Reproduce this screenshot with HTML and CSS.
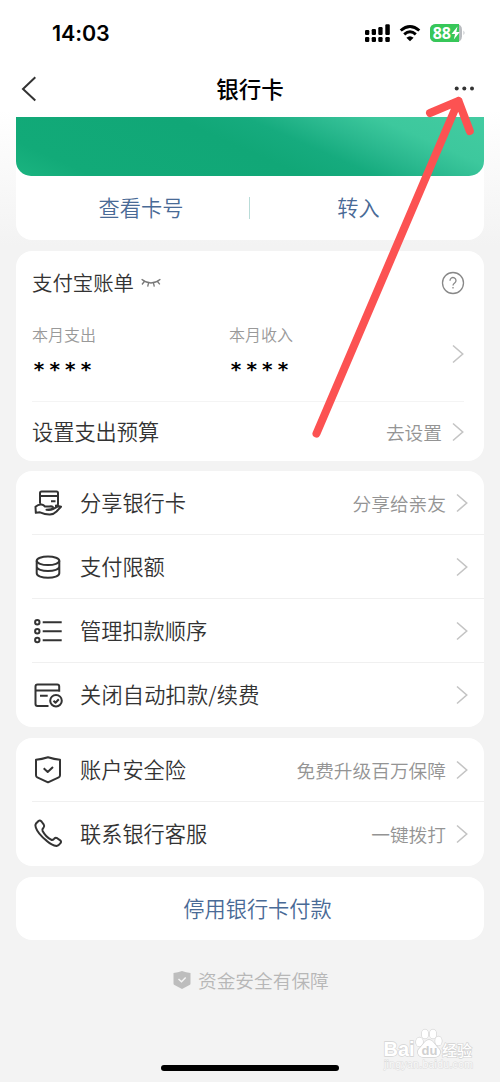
FILE: index.html
```html
<!DOCTYPE html>
<html lang="zh-CN">
<head>
<meta charset="utf-8">
<title>银行卡</title>
<link rel="stylesheet" href="styles.css">
</head>
<body>
<div class="screen">
  <header class="status">
    <span class="time">14:03</span>
    <svg class="status-icons" width="104" height="24" viewBox="0 0 104 24">
      <g fill="#000">
        <rect x="1" y="9" width="4.300" height="5" rx="1.200"/><rect x="7.700" y="8" width="4.300" height="6" rx="1.200"/><rect x="14.300" y="6" width="4.300" height="8" rx="1.200"/><rect x="21.300" y="3.300" width="4.500" height="10.700" rx="1.200"/>
        <rect x="1" y="16" width="4.300" height="5" rx="1.200"/><rect x="7.700" y="16" width="4.300" height="5" rx="1.200"/><rect x="14.300" y="16" width="4.300" height="5" rx="1.200"/><rect x="21.300" y="16" width="4.500" height="5" rx="1.200"/>
      </g>
      <path d="M36.700 9.500Q46 1.400 55.300 9.500M40.200 13.300Q46 8.100 51.800 13.300" fill="none" stroke="#000" stroke-width="2.900"/>
      <path d="M42.400 16.700Q46 13.700 49.600 16.700L46 20.300Z" fill="#000"/>
      <path d="M71.500 3h21a5.500 5.500 0 0 1 5.500 5.500v7a5.500 5.500 0 0 1-5.500 5.500h-21a5.500 5.500 0 0 1-5.500-5.500V8.500a5.500 5.500 0 0 1 5.500-5.500z" fill="#b9bcc0"/>
      <path d="M71.500 3H95v18H71.500a5.500 5.500 0 0 1-5.500-5.500V8.500a5.500 5.500 0 0 1 5.500-5.500z" fill="#37c759"/>
      <path d="M99.500 9.500q2 2.300 0 4.600z" fill="#b9bcc0"/>
      <text class="battery" x="68.800" y="18">88</text>
      <path d="M93.500 5.500L87.500 13h3.600l-1.300 5.500 6-7.600h-3.500z" fill="#fff"/>
    </svg>
  </header>
  <nav class="nav">
    <svg class="back" width="16" height="26" viewBox="0 0 16 26"><path d="M15.300 1.300L3 13l12.300 11.500" fill="none" stroke="#333" stroke-width="2"/></svg>
    <h1 class="title">银行卡</h1>
    <svg class="more" width="22" height="6" viewBox="0 0 22 6" fill="#333"><circle cx="2.700" cy="2.500" r="2"/><circle cx="10.300" cy="2.500" r="2"/><circle cx="18" cy="2.500" r="2"/></svg>
  </nav>
  <main class="content">
    <section class="card bank">
      <div class="bank-face"></div>
      <div class="bank-actions"><a>查看卡号</a><i class="split"></i><a>转入</a></div>
    </section>

    <section class="card bill">
      <div class="bill-head">
        <span class="bill-title">支付宝账单</span>
        <svg width="20" height="10" viewBox="0 0 20 10" fill="none" stroke="#777" stroke-width="1.300"><path d="M.6 1.300Q10 8.700 19.400 1.300M3.300 3.500L1 6.500M7.500 5L6.700 8.700M12.500 5l.8 3.700M16.500 3.500L18.800 6.300"/></svg>
        <svg class="help" width="24" height="24" viewBox="0 0 24 24" fill="none" stroke="#888" stroke-width="1.300"><circle cx="12" cy="12" r="10.500"/><path d="M9 9.700a3 3 0 1 1 4.700 2.300C12.500 12.800 12 13.100 12 14.500M12 16v1.500"/></svg>
      </div>
      <div class="totals">
        <div class="total"><span class="caption">本月支出</span><span class="stars">****</span></div>
        <div class="total"><span class="caption">本月收入</span><span class="stars">****</span></div>
        <svg class="chev" viewBox="0 0 12 20"><path d="M1 1.500L10.700 10 1 18.500"/></svg>
      </div>
      <div class="budget">
        <span class="label">设置支出预算</span><span class="hint">去设置</span>
        <svg class="chev" viewBox="0 0 12 20"><path d="M1 1.500L10.700 10 1 18.500"/></svg>
      </div>
    </section>

    <section class="card list">
      <div class="row">
        <svg class="icon" viewBox="0 0 32 32"><path d="M8 16.500V6Q8 4.500 9.500 4.500h15Q26 4.500 26 6v11q0 1.700-1.800 1.700H23M8 9h18M19 14.200h4.500M3.500 19.700Q6.500 17 9.500 17.500q2 .3 3.500 2 3 .3 6-.2 2.300 0 1.800 1.500-.6 1.400-3.800 1.700l-2.500.3q4 .5 6.500-.7l4-2.300q2-.9 4-.1l-4.500 4.800q-2.700 2.700-6.500 3-4.500.2-10-2.200l-4.200.5z"/></svg>
        <span class="label">分享银行卡</span><span class="hint">分享给亲友</span><svg class="chev" viewBox="0 0 12 20"><path d="M1 1.500L10.700 10 1 18.500"/></svg>
      </div>
      <div class="row">
        <svg class="icon" viewBox="0 0 32 32"><ellipse cx="16" cy="9.800" rx="11.300" ry="4.300"/><path d="M4.700 9.800v12.500c0 6 22.600 6 22.600 0V9.800M4.700 15.500c0 6 22.600 6 22.600 0"/></svg>
        <span class="label">支付限额</span><svg class="chev" viewBox="0 0 12 20"><path d="M1 1.500L10.700 10 1 18.500"/></svg>
      </div>
      <div class="row">
        <svg class="icon" viewBox="0 0 32 32"><circle cx="5.300" cy="7.300" r="2.200"/><circle cx="5.300" cy="16.200" r="2.200"/><circle cx="5.300" cy="25" r="2.200"/><path d="M10.700 7.300h19M10.700 16.300h19M10.700 25.200h19"/></svg>
        <span class="label">管理扣款顺序</span><svg class="chev" viewBox="0 0 12 20"><path d="M1 1.500L10.700 10 1 18.500"/></svg>
      </div>
      <div class="row">
        <svg class="icon" viewBox="0 0 32 32"><path d="M16.500 27H5.500Q3.500 27 3.500 25V7.500q0-2 2-2h19.700q2 0 2 2v5.300M3.500 11.500h23.700M8 16.800h7.700"/><circle cx="24" cy="21.700" r="5.800"/><path d="M21.500 21.700l2 2 3.300-3.500"/></svg>
        <span class="label wide">关闭自动扣款/续费</span><svg class="chev" viewBox="0 0 12 20"><path d="M1 1.500L10.700 10 1 18.500"/></svg>
      </div>
    </section>

    <section class="card list">
      <div class="row">
        <svg class="icon" viewBox="0 0 32 32"><path d="M16 3.300Q22.300 5.300 28 5.700v15.500q0 1.500-1.300 2.200L16 28.300 5.300 23.400Q4 22.700 4 21.200V5.700Q9.700 5.300 16 3.300zM11.700 14.300l4 3.700 5.300-5"/></svg>
        <span class="label">账户安全险</span><span class="hint">免费升级百万保障</span><svg class="chev" viewBox="0 0 12 20"><path d="M1 1.500L10.700 10 1 18.500"/></svg>
      </div>
      <div class="row">
        <svg class="icon" viewBox="0 0 32 32"><path d="M4 5.500L6.500 3Q8 1.700 9.500 3.500l2.300 3.200q1 1.500-.2 2.800-1.800 1.600-1 3.500 3.200 6 8.500 8.700 2 .7 3.300-1.200 1.200-1.300 2.800-.3l3 2.200q1.600 1.300.2 2.800-1.500 2.200-3.800 2.700-4.800-.6-9.800-5Q5.800 15.700 3.800 9.500q-.9-2.700.2-4z"/></svg>
        <span class="label">联系银行客服</span><span class="hint">一键拨打</span><svg class="chev" viewBox="0 0 12 20"><path d="M1 1.500L10.700 10 1 18.500"/></svg>
      </div>
    </section>

    <section class="card disable">停用银行卡付款</section>

    <footer class="safe">
      <svg width="18" height="20" viewBox="0 0 18 20"><path d="M9 1q4 1.600 8.500 2v10.500q0 1-1 1.500L9 19 1.500 15q-1-.5-1-1.500V3q4.500-.4 8.500-2z" fill="#bdbdbd"/><path d="M5.500 9l3 2.700L12.700 7.500" fill="none" stroke="#f4f4f4" stroke-width="1.500"/></svg>
      <span>资金安全有保障</span>
    </footer>
  </main>

  <svg class="arrow" width="500" height="460" viewBox="0 0 500 460"><path d="M316.500 433.500L458.500 101M430 113l28.500-12 11.300 30"/></svg>

  <svg class="watermark" width="100" height="46" viewBox="0 0 100 46">
    <g class="wm-shape"><text class="wm-name" x="2.500" y="29" textLength="31">Bai</text>
    <ellipse cx="38.500" cy="15" rx="3.500" ry="4.500"/><ellipse cx="44" cy="7" rx="3.300" ry="4.500"/><ellipse cx="52" cy="7" rx="3.300" ry="4.500"/><ellipse cx="57.500" cy="14" rx="3.300" ry="4.500"/>
    <path d="M48 13c4 0 6 5 9 8 4 3 2 9-3 9H42c-5 0-7-6-3-9 3-3 5-8 9-8z"/>
    <text class="wm-cn" x="61" y="28.500" textLength="30">经验</text></g>
    <text class="wm-du" x="40.500" y="28">du</text>
    <text class="wm-url" x="3" y="41" textLength="89">jingyan.baidu.com</text>
  </svg>
  <div class="home"></div>
</div>
</body>
</html>
```
FILE: styles.css
```css
* { box-sizing: border-box; }
body { margin: 0; font-family: "Noto Sans CJK SC", sans-serif; font-weight: 350; color: #333; }
.screen {
  position: relative; width: 500px; height: 1082px; overflow: hidden;
  background: linear-gradient(#fff 0, #fff 110px, #f3f3f3 245px);
}
.status { display: flex; justify-content: space-between; height: 60px; padding: 21px 32px 0 52px; }
.time { font: 600 21.500px/25px Inter, sans-serif; color: #000; letter-spacing: -.1px; }
.battery { font: 700 16px "Open Sans", sans-serif; fill: #fff; letter-spacing: -.2px; }
.nav { display: flex; align-items: center; justify-content: space-between; height: 57px; padding: 0 24px 0 20px; }
.title { margin: 0 0 2px 10px; font-size: 22.500px; font-weight: 500; line-height: 30px; color: #000; }
.content { display: flex; flex-direction: column; gap: 11px; padding: 0 16px; }
.card { background: #fff; border-radius: 16px; }
.bank { height: 123px; border-radius: 0 0 16px 16px; }
.bank-face {
  height: 59px; border-radius: 0 0 15px 15px;
  background: linear-gradient(24deg, #1bb480 0%, #12aa78 13%, #11a777 48%, #16ab7e 60%, #2bb98f 71%, #3dc89d 82%, #43cba1 100%);
}
.bank-actions { display: grid; grid-template-columns: 233px 1px 1fr; align-items: center; height: 64px; text-align: center; font-size: 21.200px; color: #496a96; }
.bank-actions a { padding: 0 0 4px 17px; }
.split { height: 22px; background: #b9dcd8; }
.bank-actions a:last-child { padding: 0 17px 4px 0; }
.bill { height: 210px; padding: 0 20px 0 16px; }
.bill-head { display: flex; align-items: center; gap: 7px; height: 63px; }
.bill-title { padding-bottom: 2px; font-size: 20.400px; }
.help { margin-left: auto; margin-right: -1px; }
.totals { display: grid; grid-template-columns: 197px 1fr 12px; height: 88px; border-bottom: 1px solid #f4f4f4; }
.total { display: flex; flex-direction: column; padding-top: 8px; }
.caption { font-size: 16px; line-height: 24px; color: #999; }
.stars { padding: 10px 0 0 1px; font: 700 20px/26px "DejaVu Sans Mono", monospace; letter-spacing: 3.600px; color: #000; }
.budget { display: flex; align-items: center; height: 59px; }
.label { padding-bottom: 2px; font-size: 21.200px; line-height: 30px; white-space: nowrap; }
.wide { letter-spacing: .2px; }
.hint { margin-left: auto; padding-bottom: 1px; font-size: 18.700px; color: #949494; white-space: nowrap; }
.chev { flex: none; width: 12px; height: 20px; fill: none; stroke: #c4c4c4; stroke-width: 1.600; }
.totals .chev { align-self: center; margin-bottom: 8px; }
.hint + .chev { margin-left: 10px; }
.label + .chev { margin-left: auto; }
.row { display: flex; align-items: center; height: 64px; margin-left: 16px; padding-right: 16px; border-bottom: 1px solid #f0f0f0; }
.row:last-child { border-bottom: 0; }
.icon { flex: none; width: 32px; height: 32px; margin-right: 16px; fill: none; stroke: #333; stroke-width: 2; stroke-linejoin: round; }
.bill + .list { margin-top: -1px; }
.disable { display: flex; justify-content: center; align-items: center; height: 63px; padding: 0 0 3px 15px; font-size: 21.200px; color: #496a96; }
.safe { display: flex; align-items: center; gap: 7px; height: 58px; padding-left: 157px; font-size: 18.700px; color: #b7b7b7; }
.safe span { padding-bottom: 2px; }
.safe svg { margin-bottom: 1px; }
.arrow { position: absolute; left: 0; top: 0; fill: none; stroke: #fc5252; stroke-width: 8; stroke-linecap: round; stroke-linejoin: round; }
.watermark { position: absolute; left: 381px; top: 1027px; }
.wm-shape { fill: #fff; stroke: #d2d2d2; stroke-width: 1.300; paint-order: stroke; }
.wm-name { font: 700 20px "Liberation Sans", sans-serif; }
.wm-cn { font: 500 15px "Noto Sans CJK SC", sans-serif; }
.wm-du { font: 700 13px "Liberation Sans", sans-serif; fill: #d0d0d0; }
.wm-url { font: 10.500px "Liberation Sans", sans-serif; fill: #fafafa; stroke: #dcdcdc; stroke-width: 1; paint-order: stroke; }
.home { position: absolute; left: 161px; top: 1065px; width: 178px; height: 6px; border-radius: 3px; background: #000; }
```
